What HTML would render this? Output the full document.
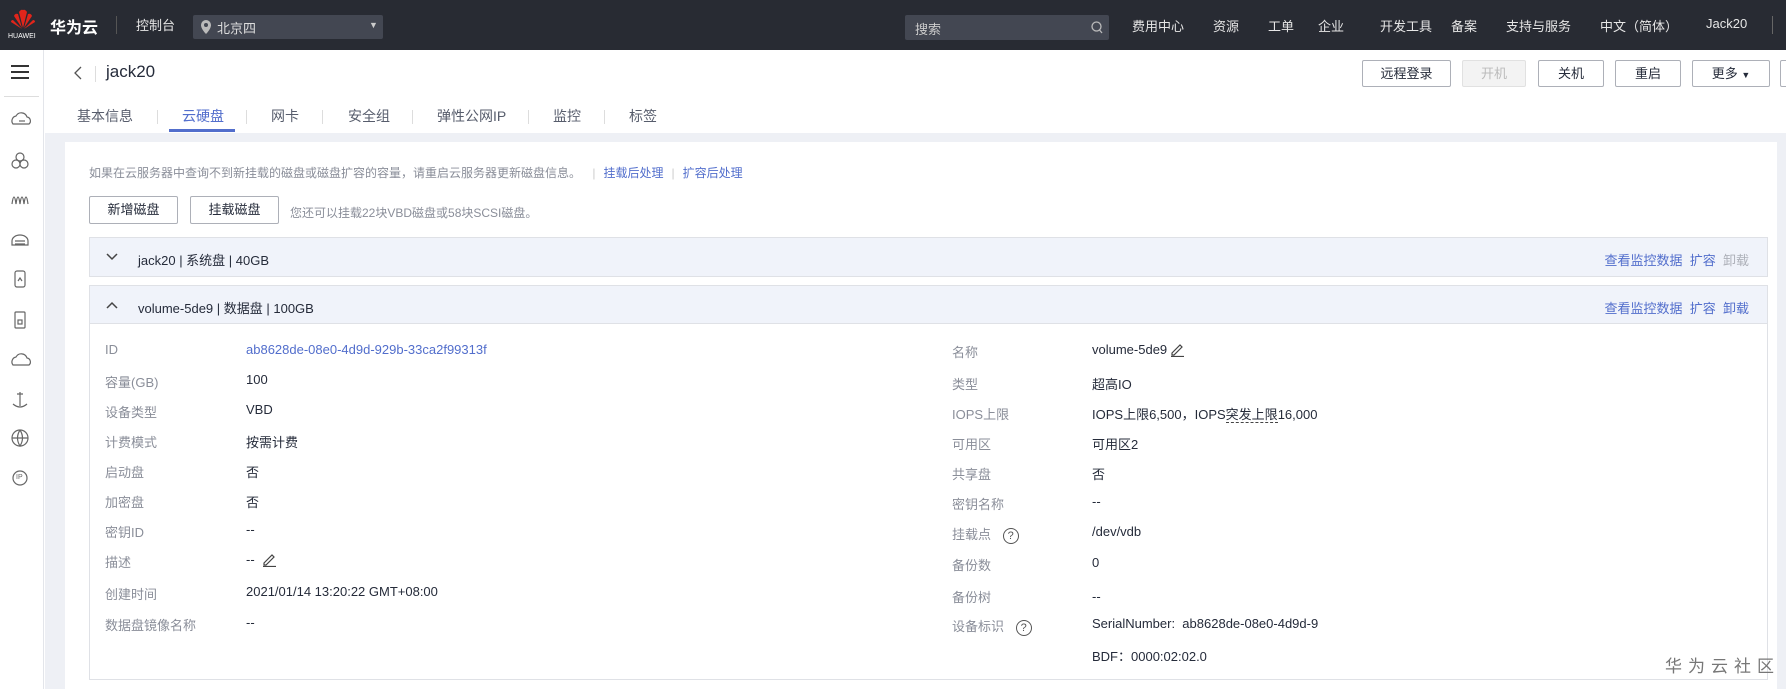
<!DOCTYPE html>
<html><head><meta charset="utf-8"><style>
*{box-sizing:border-box;margin:0;padding:0}
body{width:1786px;height:689px;overflow:hidden;background:#fff;font-family:"Liberation Sans","Noto Sans CJK SC",sans-serif;font-size:13px;color:#252b3a;position:relative}
.abs{position:absolute;white-space:nowrap}
#top{position:absolute;left:0;top:0;width:1786px;height:50px;background:#282b33;color:#e6e6e6}
#side{position:absolute;left:0;top:50px;width:44px;height:639px;background:#fff;border-right:1px solid #e3e5ea}
.gray{position:absolute;left:45px;top:133px;width:1741px;height:556px;background:#eef0f5}
.panel{position:absolute;left:65px;top:142px;width:1712px;height:547px;background:#fff}
.btn{position:absolute;height:27px;border:1px solid #adb0b8;background:#fff;text-align:center;line-height:25px;font-size:13px;color:#252b3a;border-radius:2px}
.lbl{color:#8a8e99}
.lnk{color:#526ecc}
.row{position:absolute;left:89px;width:1679px;background:#f0f3fa;border:1px solid #dfe1e6}
</style></head><body>
<div id="top">
  <svg class="abs" style="left:10px;top:8px" width="26" height="22" viewBox="0 0 26 22"><g fill="#e1251b"><path d="M13 20 L9 4 Q11 1 13 2Z"/><path d="M13 20 L17 4 Q15 1 13 2Z"/><path d="M12 20 L4 8 Q5 5 8 6Z"/><path d="M14 20 L22 8 Q21 5 18 6Z"/><path d="M12 21 L1 14 Q1 12 3 12Z"/><path d="M14 21 L25 14 Q25 12 23 12Z"/></g></svg>
  <div class="abs" style="left:8px;top:33px;font-size:7px;color:#fff">HUAWEI</div>
  <div class="abs" style="left:50px;top:14px;font-size:16px;font-weight:bold;color:#fff">华为云</div>
  <div class="abs" style="left:116px;top:16px;width:1px;height:18px;background:#555"></div>
  <div class="abs" style="left:136px;top:15px;font-size:13px">控制台</div>
  <div class="abs" style="left:193px;top:15px;width:190px;height:24px;background:#434752;border-radius:2px">
    <svg class="abs" style="left:8px;top:5px" width="10" height="14" viewBox="0 0 10 14"><path d="M5 0a5 5 0 0 1 5 5c0 4-5 9-5 9S0 9 0 5a5 5 0 0 1 5-5z" fill="#bbb"/><circle cx="5" cy="5" r="2" fill="#434752"/></svg>
    <span class="abs" style="left:24px;top:3px;color:#ddd">北京四</span>
    <span class="abs" style="left:176px;top:5px;font-size:9px;color:#ccc">▼</span>
  </div>
  <div class="abs" style="left:905px;top:15px;width:204px;height:25px;background:#434752;border-radius:2px">
    <span class="abs" style="left:10px;top:4px;color:#ccc">搜索</span>
    <svg class="abs" style="left:186px;top:6px" width="12" height="13" viewBox="0 0 12 13"><circle cx="5.5" cy="5.5" r="4.5" fill="none" stroke="#bbb" stroke-width="1.3"/><path d="M8.5 9 L11 12" stroke="#bbb" stroke-width="1.3"/></svg>
  </div>
  <div class="abs" style="left:1132px;top:16px">费用中心</div>
  <div class="abs" style="left:1213px;top:16px">资源</div>
  <div class="abs" style="left:1268px;top:16px">工单</div>
  <div class="abs" style="left:1318px;top:16px">企业</div>
  <div class="abs" style="left:1380px;top:16px">开发工具</div>
  <div class="abs" style="left:1451px;top:16px">备案</div>
  <div class="abs" style="left:1506px;top:16px">支持与服务</div>
  <div class="abs" style="left:1600px;top:16px">中文（简体）</div>
  <div class="abs" style="left:1706px;top:16px">Jack20</div>
  <div class="abs" style="left:1772px;top:16px;width:1px;height:18px;background:#666"></div>
</div>
<div id="side">
  <div class="abs" style="left:11px;top:15px;width:18px;height:2px;background:#333;box-shadow:0 6px 0 #333,0 12px 0 #333"></div>
  <div class="abs" style="left:4px;top:46px;width:35px;height:1px;background:#ddd"></div>
  <svg class="abs" style="left:7px;top:10px" width="30" height="440" viewBox="0 0 30 440" fill="none" stroke="#666" stroke-width="1.2">
    <g transform="translate(2,59)"><path d="M4 5 a5 5 0 0 1 3-8 a6 6 0 0 1 11 1 a4 4 0 0 1 2 7z"/><path d="M10 2h6"/></g>
    <g transform="translate(2,101)"><circle cx="11" cy="-4" r="4"/><circle cx="7" cy="3" r="4"/><circle cx="15" cy="3" r="4"/></g>
    <g transform="translate(2,138)"><path d="M3 6 q2-14 4 0 q2-14 4 0 q2-14 4 0 q2-14 4 0"/></g>
    <g transform="translate(2,178)"><path d="M3 3 a8 6 0 0 1 16 0 v4 h-16z M6 3h10 M6 6h10"/></g>
    <g transform="translate(2,219)"><rect x="6" y="-8" width="10" height="16" rx="2"/><path d="M9 2 l2-3 l2 3"/></g>
    <g transform="translate(2,260)"><rect x="6" y="-8" width="10" height="16" rx="1"/><rect x="9" y="0" width="4" height="4"/></g>
    <g transform="translate(2,300)"><path d="M4 5 a5 5 0 0 1 3-8 a6 6 0 0 1 11 1 a4 4 0 0 1 2 7z"/></g>
    <g transform="translate(2,340)"><path d="M11 -8 v14 M4 4 q7 6 14 0 M8 -6h6"/></g>
    <g transform="translate(2,378)"><circle cx="11" cy="0" r="8"/><path d="M3 0h16M11 -8q-5 8 0 16q5-8 0-16"/></g>
    <g transform="translate(2,418)"><circle cx="11" cy="0" r="7"/></g>
  </svg>
  <div class="abs" style="left:16px;top:424px;font-size:7px;color:#666">IP</div>
</div>
<svg class="abs" style="left:74px;top:66px" width="8" height="14" viewBox="0 0 8 14"><path d="M7 1 L1 7 L7 13" fill="none" stroke="#555" stroke-width="1.3"/></svg>
<div class="abs" style="left:95px;top:66px;width:1px;height:16px;background:#ddd"></div>
<div class="abs" style="left:106px;top:62px;font-size:17px;color:#252b3a">jack20</div>
<div class="btn" style="left:1362px;top:60px;width:89px">远程登录</div>
<div class="btn" style="left:1462px;top:60px;width:64px;background:#f3f3f3;border-color:#e1e1e1;color:#bbb">开机</div>
<div class="btn" style="left:1538px;top:60px;width:66px">关机</div>
<div class="btn" style="left:1615px;top:60px;width:66px">重启</div>
<div class="btn" style="left:1692px;top:60px;width:78px">更多 <span style="font-size:9px">▼</span></div>
<div class="btn" style="left:1780px;top:60px;width:30px"></div>
<div class="abs" style="left:77px;top:106px;font-size:14px;color:#575d6c">基本信息</div>
<div class="abs" style="left:182px;top:106px;font-size:14px;color:#526ecc">云硬盘</div>
<div class="abs" style="left:169px;top:129px;width:66px;height:3px;background:#526ecc"></div>
<div class="abs" style="left:271px;top:106px;font-size:14px;color:#575d6c">网卡</div>
<div class="abs" style="left:348px;top:106px;font-size:14px;color:#575d6c">安全组</div>
<div class="abs" style="left:437px;top:106px;font-size:14px;color:#575d6c">弹性公网IP</div>
<div class="abs" style="left:553px;top:106px;font-size:14px;color:#575d6c">监控</div>
<div class="abs" style="left:629px;top:106px;font-size:14px;color:#575d6c">标签</div>
<div class="abs" style="left:157px;top:110px;width:1px;height:14px;background:#ddd"></div>
<div class="abs" style="left:246px;top:110px;width:1px;height:14px;background:#ddd"></div>
<div class="abs" style="left:322px;top:110px;width:1px;height:14px;background:#ddd"></div>
<div class="abs" style="left:412px;top:110px;width:1px;height:14px;background:#ddd"></div>
<div class="abs" style="left:528px;top:110px;width:1px;height:14px;background:#ddd"></div>
<div class="abs" style="left:604px;top:110px;width:1px;height:14px;background:#ddd"></div>
<div class="gray"></div>
<div class="panel"></div>
<div class="abs lbl" style="left:89px;top:164px;font-size:12px">如果在云服务器中查询不到新挂载的磁盘或磁盘扩容的容量，请重启云服务器更新磁盘信息。 <span style="margin:0 8px;color:#ccc">|</span><span class="lnk">挂载后处理</span><span style="margin:0 8px;color:#ccc">|</span><span class="lnk">扩容后处理</span></div>
<div class="btn" style="left:89px;top:196px;width:89px;height:28px">新增磁盘</div>
<div class="btn" style="left:190px;top:196px;width:89px;height:28px">挂载磁盘</div>
<div class="abs lbl" style="left:290px;top:204px;font-size:12px">您还可以挂载22块VBD磁盘或58块SCSI磁盘。</div>
<div class="row" style="top:237px;height:40px">
  <svg class="abs" style="left:16px;top:15px" width="12" height="8" viewBox="0 0 12 8"><path d="M1 1 L6 6 L11 1" fill="none" stroke="#444" stroke-width="1.5"/></svg>
  <span class="abs" style="left:48px;top:12px">jack20 | 系统盘 | 40GB</span>
  <span class="abs lnk" style="right:18px;top:12px">查看监控数据 &nbsp;扩容 &nbsp;<span style="color:#adb0b8">卸载</span></span>
</div>
<div class="row" style="top:285px;height:395px;background:#fff">
  <div style="position:absolute;left:0;top:0;right:0;height:38px;background:#f0f3fa;border-bottom:1px solid #dfe1e6"></div>
  <svg class="abs" style="left:16px;top:15px" width="12" height="8" viewBox="0 0 12 8"><path d="M1 7 L6 2 L11 7" fill="none" stroke="#444" stroke-width="1.5"/></svg>
  <span class="abs" style="left:48px;top:12px">volume-5de9 | 数据盘 | 100GB</span>
  <span class="abs lnk" style="right:18px;top:12px">查看监控数据 &nbsp;扩容 &nbsp;卸载</span>
</div>
<div class="abs lbl" style="left:105px;top:342px">ID</div><div class="abs lnk" style="left:246px;top:342px">ab8628de-08e0-4d9d-929b-33ca2f99313f</div>
<div class="abs lbl" style="left:105px;top:372px">容量(GB)</div><div class="abs" style="left:246px;top:372px">100</div>
<div class="abs lbl" style="left:105px;top:402px">设备类型</div><div class="abs" style="left:246px;top:402px">VBD</div>
<div class="abs lbl" style="left:105px;top:432px">计费模式</div><div class="abs" style="left:246px;top:432px">按需计费</div>
<div class="abs lbl" style="left:105px;top:462px">启动盘</div><div class="abs" style="left:246px;top:462px">否</div>
<div class="abs lbl" style="left:105px;top:492px">加密盘</div><div class="abs" style="left:246px;top:492px">否</div>
<div class="abs lbl" style="left:105px;top:522px">密钥ID</div><div class="abs" style="left:246px;top:522px">--</div>
<div class="abs lbl" style="left:105px;top:552px">描述</div><div class="abs" style="left:246px;top:552px">--</div>
<svg class="abs" style="left:262px;top:552px" width="15" height="15" viewBox="0 0 15 15"><path d="M2 11 L10 3 L12 5 L4 13 H2Z M1 14.5h13" fill="none" stroke="#444" stroke-width="1.2"/></svg>
<div class="abs lbl" style="left:105px;top:584px">创建时间</div><div class="abs" style="left:246px;top:584px">2021/01/14 13:20:22 GMT+08:00</div>
<div class="abs lbl" style="left:105px;top:615px">数据盘镜像名称</div><div class="abs" style="left:246px;top:615px">--</div>
<div class="abs lbl" style="left:952px;top:342px">名称</div><div class="abs" style="left:1092px;top:342px">volume-5de9</div>
<svg class="abs" style="left:1170px;top:342px" width="15" height="15" viewBox="0 0 15 15"><path d="M2 11 L10 3 L12 5 L4 13 H2Z M1 14.5h13" fill="none" stroke="#444" stroke-width="1.2"/></svg>
<div class="abs lbl" style="left:952px;top:374px">类型</div><div class="abs" style="left:1092px;top:374px">超高IO</div>
<div class="abs lbl" style="left:952px;top:404px">IOPS上限</div><div class="abs" style="left:1092px;top:404px">IOPS上限6,500，IOPS<span style="border-bottom:1px dashed #444">突发上限</span>16,000</div>
<div class="abs lbl" style="left:952px;top:434px">可用区</div><div class="abs" style="left:1092px;top:434px">可用区2</div>
<div class="abs lbl" style="left:952px;top:464px">共享盘</div><div class="abs" style="left:1092px;top:464px">否</div>
<div class="abs lbl" style="left:952px;top:494px">密钥名称</div><div class="abs" style="left:1092px;top:494px">--</div>
<div class="abs lbl" style="left:952px;top:524px">挂载点 <span style="display:inline-block;width:16px;height:16px;border:1.3px solid #555;border-radius:50%;text-align:center;line-height:14px;font-size:11px;color:#555;margin-left:8px">?</span></div><div class="abs" style="left:1092px;top:524px">/dev/vdb</div>
<div class="abs lbl" style="left:952px;top:555px">备份数</div><div class="abs" style="left:1092px;top:555px">0</div>
<div class="abs lbl" style="left:952px;top:587px">备份树</div><div class="abs" style="left:1092px;top:589px">--</div>
<div class="abs lbl" style="left:952px;top:616px">设备标识 <span style="display:inline-block;width:16px;height:16px;border:1.3px solid #555;border-radius:50%;text-align:center;line-height:14px;font-size:11px;color:#555;margin-left:8px">?</span></div><div class="abs" style="left:1092px;top:616px">SerialNumber:&nbsp; ab8628de-08e0-4d9d-9</div>
<div class="abs" style="left:1092px;top:646px">BDF：0000:02:02.0</div>
<div class="abs" style="left:1665px;top:652px;font-size:17px;color:#777;letter-spacing:6px">华为云社区</div>
</body></html>
